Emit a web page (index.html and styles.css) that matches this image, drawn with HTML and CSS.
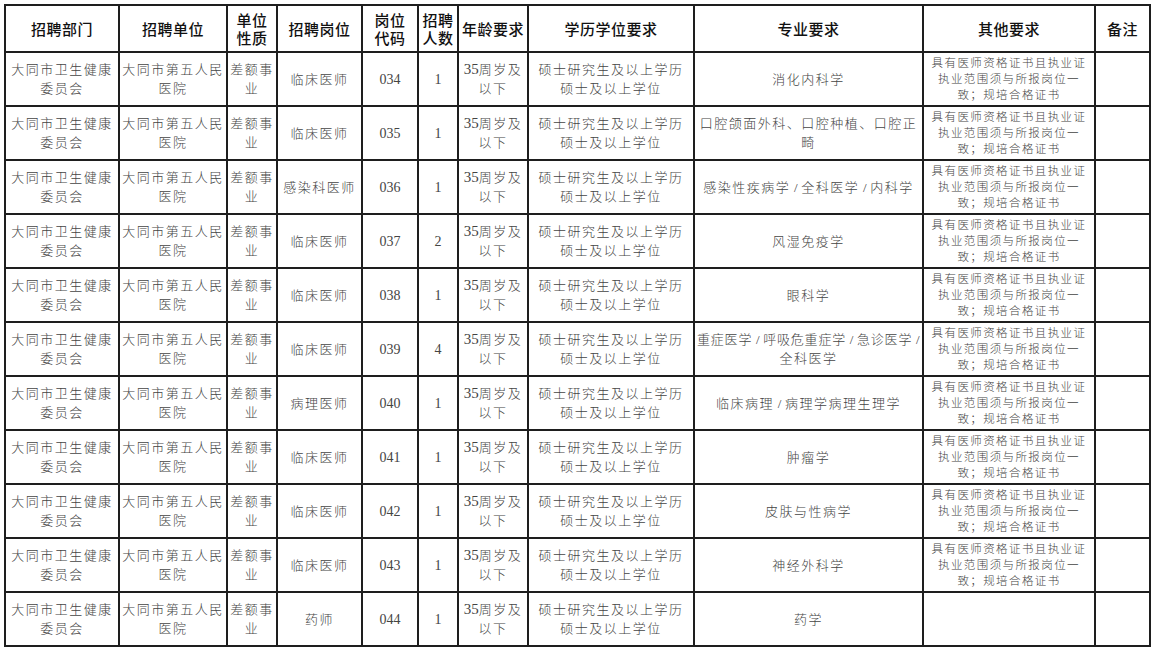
FILE: index.html
```html
<!DOCTYPE html>
<html lang="zh-CN">
<head>
<meta charset="utf-8">
<title>招聘岗位表</title>
<link rel="stylesheet" href="styles.css">
</head>
<body>
<table class="jobs">
  <colgroup>
    <col class="c1"><col class="c2"><col class="c3"><col class="c4"><col class="c5"><col class="c6"><col class="c7"><col class="c8"><col class="c9"><col class="c10"><col class="c11">
  </colgroup>
  <thead>
    <tr>
      <th>招聘部门</th>
      <th>招聘单位</th>
      <th>单位<br>性质</th>
      <th>招聘岗位</th>
      <th>岗位<br>代码</th>
      <th>招聘<br>人数</th>
      <th>年龄要求</th>
      <th>学历学位要求</th>
      <th>专业要求</th>
      <th>其他要求</th>
      <th>备注</th>
    </tr>
  </thead>
  <tbody>
    <tr>
      <td>大同市卫生健康委员会</td><td>大同市第五人民医院</td><td>差额事业</td><td>临床医师</td><td class="num">034</td><td class="num">1</td><td><span class="dg">35</span>周岁及以下</td><td>硕士研究生及以上学历<br>硕士及以上学位</td><td>消化内科学</td><td class="other">具有医师资格证书且执业证<br>执业范围须与所报岗位一<br>致；规培合格证书</td><td></td>
    </tr>
    <tr>
      <td>大同市卫生健康委员会</td><td>大同市第五人民医院</td><td>差额事业</td><td>临床医师</td><td class="num">035</td><td class="num">1</td><td><span class="dg">35</span>周岁及以下</td><td>硕士研究生及以上学历<br>硕士及以上学位</td><td>口腔颌面外科、口腔种植、口腔正<br>畸</td><td class="other">具有医师资格证书且执业证<br>执业范围须与所报岗位一<br>致；规培合格证书</td><td></td>
    </tr>
    <tr>
      <td>大同市卫生健康委员会</td><td>大同市第五人民医院</td><td>差额事业</td><td>感染科医师</td><td class="num">036</td><td class="num">1</td><td><span class="dg">35</span>周岁及以下</td><td>硕士研究生及以上学历<br>硕士及以上学位</td><td>感染性疾病学<span class="sl">/</span>全科医学<span class="sl">/</span>内科学</td><td class="other">具有医师资格证书且执业证<br>执业范围须与所报岗位一<br>致；规培合格证书</td><td></td>
    </tr>
    <tr>
      <td>大同市卫生健康委员会</td><td>大同市第五人民医院</td><td>差额事业</td><td>临床医师</td><td class="num">037</td><td class="num">2</td><td><span class="dg">35</span>周岁及以下</td><td>硕士研究生及以上学历<br>硕士及以上学位</td><td>风湿免疫学</td><td class="other">具有医师资格证书且执业证<br>执业范围须与所报岗位一<br>致；规培合格证书</td><td></td>
    </tr>
    <tr>
      <td>大同市卫生健康委员会</td><td>大同市第五人民医院</td><td>差额事业</td><td>临床医师</td><td class="num">038</td><td class="num">1</td><td><span class="dg">35</span>周岁及以下</td><td>硕士研究生及以上学历<br>硕士及以上学位</td><td>眼科学</td><td class="other">具有医师资格证书且执业证<br>执业范围须与所报岗位一<br>致；规培合格证书</td><td></td>
    </tr>
    <tr>
      <td>大同市卫生健康委员会</td><td>大同市第五人民医院</td><td>差额事业</td><td>临床医师</td><td class="num">039</td><td class="num">4</td><td><span class="dg">35</span>周岁及以下</td><td>硕士研究生及以上学历<br>硕士及以上学位</td><td><span class="nw">重症医学<span class="sl">/</span>呼吸危重症学<span class="sl">/</span>急诊医学<span class="sl">/</span></span><br>全科医学</td><td class="other">具有医师资格证书且执业证<br>执业范围须与所报岗位一<br>致；规培合格证书</td><td></td>
    </tr>
    <tr>
      <td>大同市卫生健康委员会</td><td>大同市第五人民医院</td><td>差额事业</td><td>病理医师</td><td class="num">040</td><td class="num">1</td><td><span class="dg">35</span>周岁及以下</td><td>硕士研究生及以上学历<br>硕士及以上学位</td><td>临床病理<span class="sl">/</span>病理学病理生理学</td><td class="other">具有医师资格证书且执业证<br>执业范围须与所报岗位一<br>致；规培合格证书</td><td></td>
    </tr>
    <tr>
      <td>大同市卫生健康委员会</td><td>大同市第五人民医院</td><td>差额事业</td><td>临床医师</td><td class="num">041</td><td class="num">1</td><td><span class="dg">35</span>周岁及以下</td><td>硕士研究生及以上学历<br>硕士及以上学位</td><td>肿瘤学</td><td class="other">具有医师资格证书且执业证<br>执业范围须与所报岗位一<br>致；规培合格证书</td><td></td>
    </tr>
    <tr>
      <td>大同市卫生健康委员会</td><td>大同市第五人民医院</td><td>差额事业</td><td>临床医师</td><td class="num">042</td><td class="num">1</td><td><span class="dg">35</span>周岁及以下</td><td>硕士研究生及以上学历<br>硕士及以上学位</td><td>皮肤与性病学</td><td class="other">具有医师资格证书且执业证<br>执业范围须与所报岗位一<br>致；规培合格证书</td><td></td>
    </tr>
    <tr>
      <td>大同市卫生健康委员会</td><td>大同市第五人民医院</td><td>差额事业</td><td>临床医师</td><td class="num">043</td><td class="num">1</td><td><span class="dg">35</span>周岁及以下</td><td>硕士研究生及以上学历<br>硕士及以上学位</td><td>神经外科学</td><td class="other">具有医师资格证书且执业证<br>执业范围须与所报岗位一<br>致；规培合格证书</td><td></td>
    </tr>
    <tr>
      <td>大同市卫生健康委员会</td><td>大同市第五人民医院</td><td>差额事业</td><td>药师</td><td class="num">044</td><td class="num">1</td><td><span class="dg">35</span>周岁及以下</td><td>硕士研究生及以上学历<br>硕士及以上学位</td><td>药学</td><td class="other"></td><td></td>
    </tr>
  </tbody>
</table>
</body>
</html>
```

FILE: styles.css
```css
* { box-sizing: border-box; }

html, body {
  margin: 0;
  background: #ffffff;
}

body {
  padding: 4px 0 0 4px;
  font-family: "Liberation Serif", "Noto Sans CJK SC", serif;
  color: #444444;
}

.jobs {
  table-layout: fixed;
  border-collapse: separate;
  border-spacing: 0;
  width: 1147px;
  border-left: 2px solid #1e1e1e;
  border-top: 2px solid #1e1e1e;
}

.c1 { width: 114px; }
.c2 { width: 108px; }
.c3 { width: 50px; }
.c4 { width: 85px; }
.c5 { width: 56px; }
.c6 { width: 40px; }
.c7 { width: 70px; }
.c8 { width: 166px; }
.c9 { width: 229px; }
.c10 { width: 172px; }
.c11 { width: 55px; }

.jobs th,
.jobs td {
  border-right: 2px solid #1e1e1e;
  border-bottom: 2px solid #1e1e1e;
  text-align: center;
  vertical-align: middle;
  padding: 0 2px;
  overflow: hidden;
}

.jobs th {
  height: 47px;
  font-family: "Noto Sans CJK SC", sans-serif;
  font-weight: 500;
  font-size: 15px;
  line-height: 18px;
  letter-spacing: 0.5px;
  color: #111111;
}

.jobs td {
  height: 54px;
  font-size: 13px;
  font-weight: 300;
  line-height: 19px;
  letter-spacing: 1.5px;
}

.jobs td.num {
  font-size: 14px;
  font-weight: 400;
  letter-spacing: 0;
}

.dg {
  font-size: 15px;
  font-weight: 400;
  letter-spacing: 0;
}

.jobs td.other {
  font-size: 11.5px;
  line-height: 16px;
  letter-spacing: 1.4px;
  padding: 0 4px;
}

.nw {
  white-space: nowrap;
  letter-spacing: 0.8px;
}

.sl {
  display: inline-block;
  width: 11px;
  letter-spacing: 0;
  text-align: center;
}
```
